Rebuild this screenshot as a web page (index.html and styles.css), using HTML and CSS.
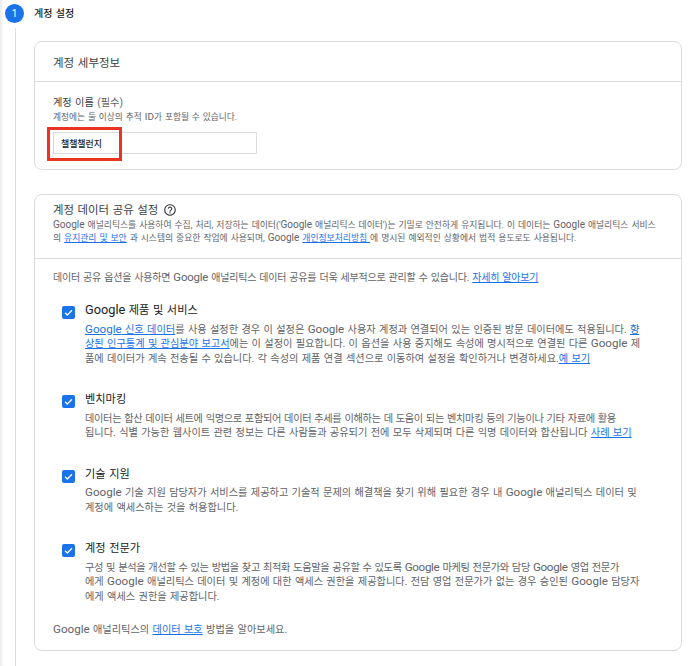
FILE: index.html
```html
<!DOCTYPE html>
<html lang="ko">
<head>
<meta charset="utf-8">
<title>계정 설정</title>
<link rel="stylesheet" href="styles.css">
</head>
<body>
<div class="step-head">
  <div class="step-num">1</div>
  <div class="step-title">계정 설정</div>
</div>
<div class="step-body">
  <section class="card">
    <div class="card-head">계정 세부정보</div>
    <div class="card-body">
      <div class="label">계정 이름 <span class="muted">(필수)</span></div>
      <div class="helper">계정에는 둘 이상의 추적 <span class="en">ID</span>가 포함될 수 있습니다.</div>
      <div class="field">챌챌챌런지<span class="mark"></span></div>
    </div>
  </section>

  <section class="card">
    <div class="c2-head">
      <div class="c2-title">계정 데이터 공유 설정
        <svg class="help" width="14" height="14" viewBox="0 0 24 24"><path d="M11 18h2v-2h-2v2zm1-16C6.48 2 2 6.48 2 12s4.48 10 10 10 10-4.48 10-10S17.52 2 12 2zm0 18c-4.41 0-8-3.59-8-8s3.59-8 8-8 8 3.59 8 8-3.59 8-8 8zm0-14c-2.21 0-4 1.79-4 4h2c0-1.1.9-2 2-2s2 .9 2 2c0 2-3 1.75-3 5h2c0-2.25 3-2.5 3-5 0-2.21-1.79-4-4-4z"/></svg>
      </div>
      <p class="c2-desc"><span class="en">Google</span> 애널리틱스를 사용하여 수집, 처리, 저장하는 데이터('<span class="en">Google</span> 애널리틱스 데이터')는 기밀로 안전하게 유지됩니다. 이 데이터는 <span class="en">Google</span> 애널리틱스 서비스<br>의 <a href="#">유지관리 및 보안</a> 과 시스템의 중요한 작업에 사용되며, <span class="en">Google</span> <a href="#">개인정보처리방침 </a>에 명시된 예외적인 상황에서 법적 용도로도 사용됩니다.</p>
    </div>
    <div class="c2-body">
      <p class="intro">데이터 공유 옵션을 사용하면 <span class="en">Google</span> 애널리틱스 데이터 공유를 더욱 세부적으로 관리할 수 있습니다. <a href="#">자세히 알아보기</a></p>

      <div class="opt first">
        <span class="cb"><svg width="11" height="11" viewBox="0 0 24 24"><path d="M4.5 12.5l5 5L19.5 7" fill="none" stroke="#fff" stroke-width="2.8"/></svg></span>
        <div class="opt-text">
          <div class="opt-title"><span class="en">Google</span> 제품 및 서비스</div>
          <p class="opt-desc"><a href="#"><span class="en">Google</span> 신호 데이터</a>를 사용 설정한 경우 이 설정은 <span class="en">Google</span> 사용자 계정과 연결되어 있는 인증된 방문 데이터에도 적용됩니다. <a href="#">향</a><br><a href="#">상된 인구통계 및 관심분야 보고서</a>에는 이 설정이 필요합니다. 이 옵션을 사용 중지해도 속성에 명시적으로 연결된 다른 <span class="en">Google</span> 제<br>품에 데이터가 계속 전송될 수 있습니다. 각 속성의 제품 연결 섹션으로 이동하여 설정을 확인하거나 변경하세요.<a href="#">예 보기</a></p>
        </div>
      </div>

      <div class="opt">
        <span class="cb"><svg width="11" height="11" viewBox="0 0 24 24"><path d="M4.5 12.5l5 5L19.5 7" fill="none" stroke="#fff" stroke-width="2.8"/></svg></span>
        <div class="opt-text">
          <div class="opt-title">벤치마킹</div>
          <p class="opt-desc"><span class="tight">데이터는 합산 데이터 세트에 익명으로 포함되어 데이터 추세를 이해하는 데 도움이 되는 벤치마킹 등의 기능이나 기타 자료에 활용</span><br>됩니다. 식별 가능한 웹사이트 관련 정보는 다른 사람들과 공유되기 전에 모두 삭제되며 다른 익명 데이터와 합산됩니다 <a href="#">사례 보기</a></p>
        </div>
      </div>

      <div class="opt">
        <span class="cb"><svg width="11" height="11" viewBox="0 0 24 24"><path d="M4.5 12.5l5 5L19.5 7" fill="none" stroke="#fff" stroke-width="2.8"/></svg></span>
        <div class="opt-text">
          <div class="opt-title">기술 지원</div>
          <p class="opt-desc"><span class="en">Google</span> 기술 지원 담당자가 서비스를 제공하고 기술적 문제의 해결책을 찾기 위해 필요한 경우 내 <span class="en">Google</span> 애널리틱스 데이터 및<br>계정에 액세스하는 것을 허용합니다.</p>
        </div>
      </div>

      <div class="opt">
        <span class="cb"><svg width="11" height="11" viewBox="0 0 24 24"><path d="M4.5 12.5l5 5L19.5 7" fill="none" stroke="#fff" stroke-width="2.8"/></svg></span>
        <div class="opt-text">
          <div class="opt-title">계정 전문가</div>
          <p class="opt-desc"><span class="tight">구성 및 분석을 개선할 수 있는 방법을 찾고 최적화 도움말을 공유할 수 있도록 <span class="en">Google</span> 마케팅 전문가와 담당 <span class="en">Google</span> 영업 전문가</span><br>에게 <span class="en">Google</span> 애널리틱스 데이터 및 계정에 대한 액세스 권한을 제공합니다. 전담 영업 전문가가 없는 경우 승인된 <span class="en">Google</span> 담당자<br>에게 액세스 권한을 제공합니다.</p>
        </div>
      </div>

      <p class="foot"><span class="en">Google</span> 애널리틱스의 <a href="#">데이터 보호</a> 방법을 알아보세요.</p>
    </div>
  </section>
</div>
</body>
</html>
```

FILE: styles.css
```css
html {
  background: #fff;
}
body {
  margin: 0;
  font-family: Roboto, "Noto Sans CJK KR", sans-serif;
  color: #202124;
  background: linear-gradient(to right, #ebebeb 0, #fff 4px);
  min-height: 666px;
  word-spacing: 0.05em;
}
p {
  margin: 0;
}
a {
  color: #1a73e8;
  text-decoration: underline;
}
.en {
  font-size: 1.14em;
  line-height: 0;
}
.tight {
  letter-spacing: -0.32px;
}

/* step header */
.step-head {
  display: flex;
  gap: 10px;
  height: 28px;
  padding: 4px 0 0 5px;
  box-sizing: border-box;
}
.step-num {
  width: 19px;
  height: 19px;
  border-radius: 50%;
  background: #1a73e8;
  color: #fff;
  font-size: 10px;
  display: flex;
  align-items: center;
  justify-content: center;
}
.step-title {
  font-size: 10px;
  line-height: 19px;
  font-weight: 500;
}
.step-body {
  margin-left: 15px;
  border-left: 1px solid #dadce0;
  padding: 13px 18px 20px 18px;
}

/* cards */
.card {
  border: 1px solid #dadce0;
  border-radius: 8px;
  background: #fff;
}
.card + .card {
  margin-top: 24px;
}
.card-head {
  height: 39px;
  display: flex;
  align-items: center;
  padding: 0 18px;
  border-bottom: 1px solid #dadce0;
  font-size: 11.5px;
  color: #3c4043;
}
.card-body {
  padding: 13px 18px 15px;
}
.label {
  font-size: 10.2px;
  line-height: 16px;
  color: #3c4043;
}
.muted {
  color: #5f6368;
}
.helper {
  font-size: 8.7px;
  line-height: 12px;
  color: #5f6368;
}
.field {
  position: relative;
  margin-top: 9px;
  width: 204px;
  height: 22px;
  box-sizing: border-box;
  border: 1px solid #dadce0;
  padding-left: 7px;
  display: flex;
  align-items: center;
  font-size: 8.9px;
  font-weight: 500;
  color: #202124;
}
.mark {
  position: absolute;
  left: -7px;
  top: -6px;
  width: 75px;
  height: 34px;
  box-sizing: border-box;
  border: 3px solid #ea3323;
}

/* card 2 */
.c2-head {
  padding: 6px 18px 13px;
  border-bottom: 1px solid #dadce0;
}
.c2-title {
  display: flex;
  align-items: center;
  gap: 5px;
  font-size: 11.4px;
  line-height: 18px;
  color: #3c4043;
}
.help {
  fill: #3c4043;
  flex: none;
}
.c2-desc {
  font-size: 8.8px;
  line-height: 13px;
  color: #5f6368;
  white-space: nowrap;
}
.c2-body {
  padding: 11px 18px 12px;
}
.intro {
  font-size: 10px;
  line-height: 16px;
  color: #5f6368;
  white-space: nowrap;
  letter-spacing: -0.2px;
}
.opt {
  display: flex;
  gap: 10px;
  padding-left: 9px;
  margin-top: 24px;
}
.opt.first {
  margin-top: 15px;
}
.cb {
  flex: none;
  width: 13px;
  height: 13px;
  margin-top: 5px;
  border-radius: 2px;
  background: #1a73e8;
  display: flex;
  align-items: center;
  justify-content: center;
}
.opt-title {
  font-size: 11.2px;
  line-height: 20px;
  color: #202124;
}
.opt-desc {
  margin-top: 1.5px;
  font-size: 10.2px;
  line-height: 14.5px;
  color: #5f6368;
  white-space: nowrap;
}
.foot {
  margin-top: 18px;
  font-size: 10.2px;
  line-height: 16px;
  color: #5f6368;
}
```
